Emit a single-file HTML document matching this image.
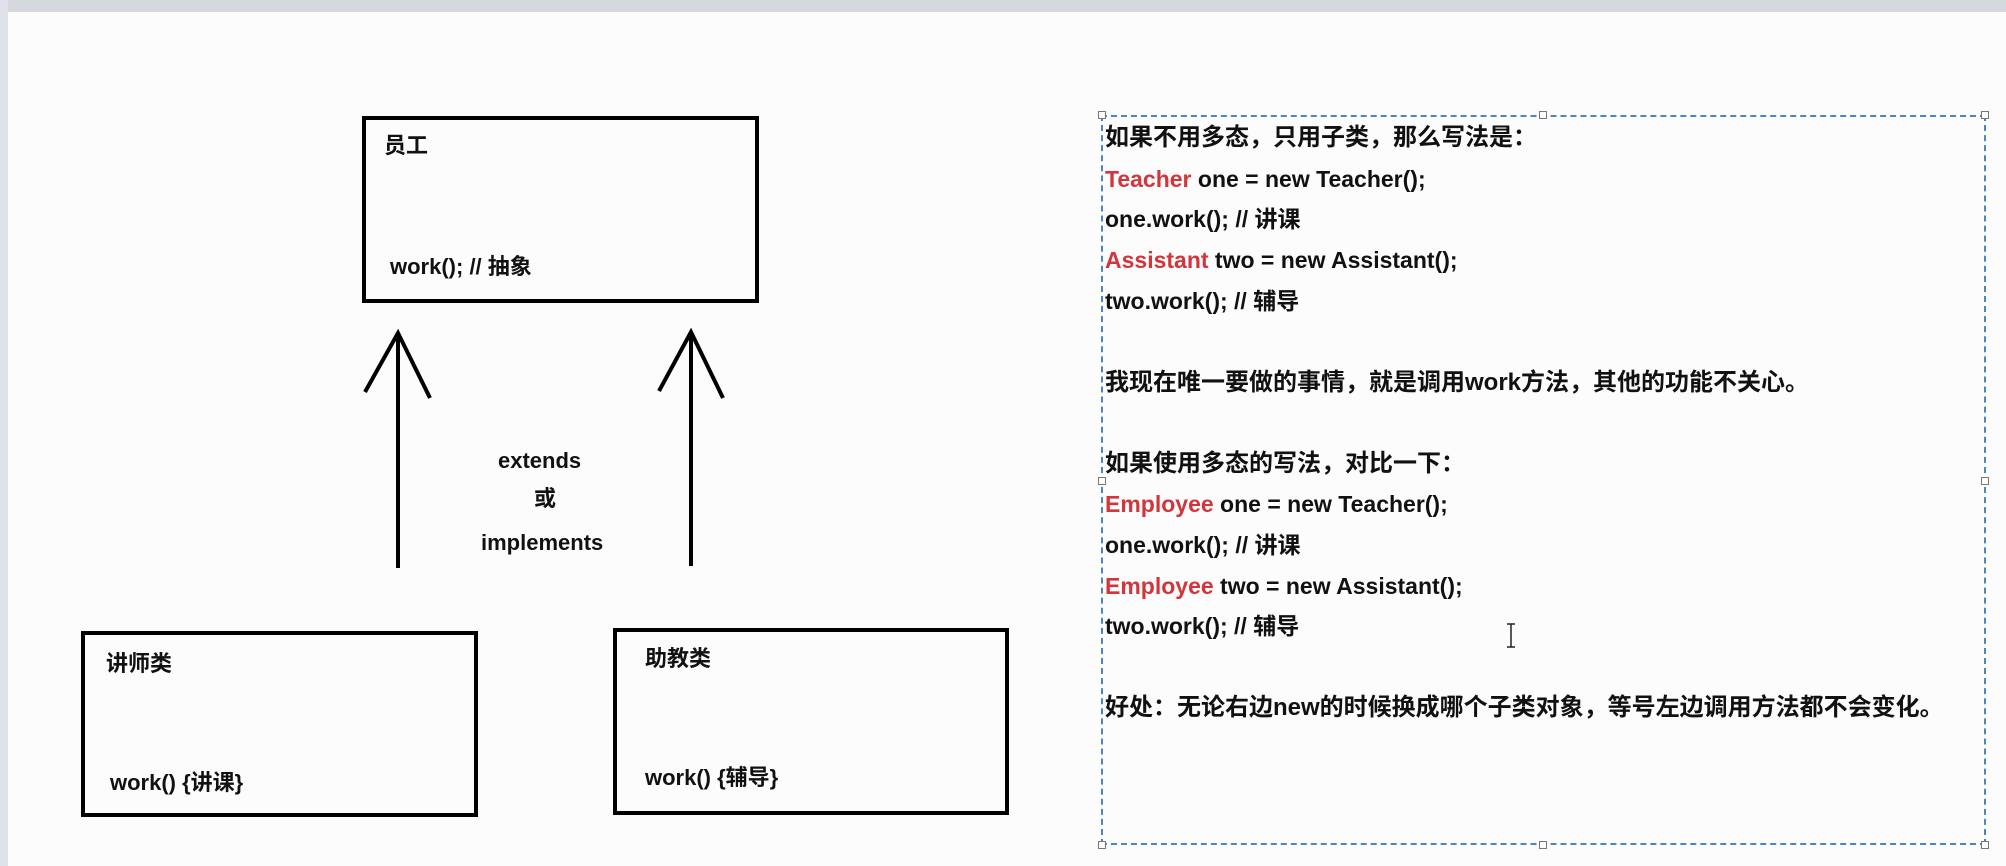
<!DOCTYPE html>
<html><head><meta charset="utf-8"><style>
html,body{margin:0;padding:0;}
body{width:2006px;height:866px;background:#fcfcfc;position:relative;overflow:hidden;font-family:"Liberation Sans","Noto Sans CJK SC",sans-serif;font-weight:bold;color:#111;}
.t{position:absolute;white-space:nowrap;line-height:1;}
.r{color:#d2353b;}
.box{position:absolute;border:4px solid #000;box-sizing:border-box;}
.h{position:absolute;width:6px;height:6px;border:1px solid #777;background:#fff;}
</style></head><body>
<div style="position:absolute;left:0;top:0;width:2006px;height:12px;background:#d5d8df"></div>
<div style="position:absolute;left:0;top:0;width:8px;height:866px;background:#dfe2ea"></div>

<div class="box" style="left:362px;top:116px;width:397px;height:187px"></div>
<div class="t" style="left:384px;top:135px;font-size:22px">员工</div>
<div class="t" style="left:390px;top:256px;font-size:22px">work(); // 抽象</div>

<svg style="position:absolute;left:0;top:0" width="1000" height="866">
<g stroke="#000" stroke-width="4" fill="none">
<line x1="398" y1="333" x2="398" y2="568"/>
<polyline points="365,392 398,333 430,398"/>
<line x1="691" y1="332" x2="691" y2="566"/>
<polyline points="659,391 691,332 723,398"/>
</g></svg>
<div class="t" style="left:498px;top:450px;font-size:22px">extends</div>
<div class="t" style="left:534px;top:488px;font-size:22px">或</div>
<div class="t" style="left:481px;top:532px;font-size:22px">implements</div>

<div class="box" style="left:81px;top:631px;width:397px;height:186px"></div>
<div class="t" style="left:106px;top:653px;font-size:22px">讲师类</div>
<div class="t" style="left:110px;top:772px;font-size:22px">work() {讲课}</div>

<div class="box" style="left:613px;top:628px;width:396px;height:187px"></div>
<div class="t" style="left:645px;top:648px;font-size:22px">助教类</div>
<div class="t" style="left:645px;top:767px;font-size:22px">work() {辅导}</div>

<div style="position:absolute;left:1101px;top:115px;width:885px;height:730px;border:2px dashed #4a86c0;box-sizing:border-box"></div>
<div class="h" style="left:1098px;top:111px"></div><div class="h" style="left:1539px;top:111px"></div><div class="h" style="left:1981px;top:111px"></div>
<div class="h" style="left:1098px;top:477px"></div><div class="h" style="left:1981px;top:477px"></div>
<div class="h" style="left:1098px;top:841px"></div><div class="h" style="left:1539px;top:841px"></div><div class="h" style="left:1981px;top:841px"></div>

<div class="t" style="left:1105px;top:126px;font-size:24px">如果不用多态，只用子类，那么写法是：</div>
<div class="t" style="left:1105px;top:168px;font-size:23px"><span class="r">Teacher</span> one = new Teacher();</div>
<div class="t" style="left:1105px;top:208px;font-size:23px">one.work(); // 讲课</div>
<div class="t" style="left:1105px;top:249px;font-size:23px"><span class="r">Assistant</span> two = new Assistant();</div>
<div class="t" style="left:1105px;top:290px;font-size:23px">two.work(); // 辅导</div>
<div class="t" style="left:1105px;top:371px;font-size:24px">我现在唯一要做的事情，就是调用work方法，其他的功能不关心。</div>
<div class="t" style="left:1105px;top:452px;font-size:24px">如果使用多态的写法，对比一下：</div>
<div class="t" style="left:1105px;top:493px;font-size:23px"><span class="r">Employee</span> one = new Teacher();</div>
<div class="t" style="left:1105px;top:534px;font-size:23px">one.work(); // 讲课</div>
<div class="t" style="left:1105px;top:575px;font-size:23px"><span class="r">Employee</span> two = new Assistant();</div>
<div class="t" style="left:1105px;top:615px;font-size:23px">two.work(); // 辅导</div>
<div class="t" style="left:1105px;top:696px;font-size:24px">好处：无论右边new的时候换成哪个子类对象，等号左边调用方法都不会变化。</div>

<svg style="position:absolute;left:1504px;top:622px" width="14" height="28"><g stroke="#222" stroke-width="1.5" fill="none"><line x1="7" y1="2" x2="7" y2="25"/><line x1="3" y1="2" x2="11" y2="2"/><line x1="3" y1="25" x2="11" y2="25"/></g></svg>
</body></html>
